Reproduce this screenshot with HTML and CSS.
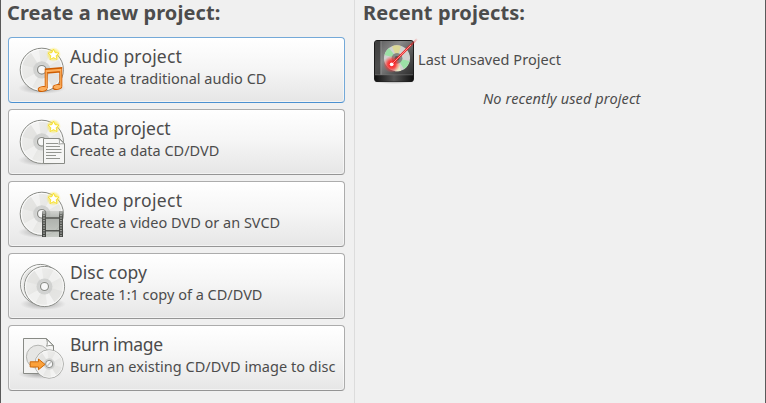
FILE: index.html
```
<!DOCTYPE html>
<html lang="en">
<head>
    <meta charset="UTF-8">
    <title>Disc Burner</title>
    <meta name="viewport" content="width=device-width, initial-scale=1.0">
    <link rel="stylesheet" href="styles.css">
</head>
<body>
    <!-- shared icon parts -->
    <svg class="defs" width="0" height="0">
        <defs>
            <linearGradient id="disc-fill" x1="0" y1="0" x2="1" y2="1">
                <stop offset="0" stop-color="#f1f1f0"/>
                <stop offset="0.5" stop-color="#e6e6e4"/>
                <stop offset="1" stop-color="#f2f2f1"/>
            </linearGradient>
            <radialGradient id="shade">
                <stop offset="0" stop-color="#000" stop-opacity="0.3"/>
                <stop offset="1" stop-color="#000" stop-opacity="0"/>
            </radialGradient>
            <radialGradient id="star-glow">
                <stop offset="0.4" stop-color="#fce94f"/>
                <stop offset="1" stop-color="#fce94f" stop-opacity="0"/>
            </radialGradient>
            <linearGradient id="film-fill" x1="0" y1="0" x2="0" y2="1">
                <stop offset="0" stop-color="#a9ada8" stop-opacity="0.4"/>
                <stop offset="0.3" stop-color="#a9ada8"/>
                <stop offset="1" stop-color="#c4c8c2"/>
            </linearGradient>
            <linearGradient id="film-edge" x1="0" y1="0" x2="0" y2="1">
                <stop offset="0" stop-color="#555753" stop-opacity="0.3"/>
                <stop offset="0.2" stop-color="#555753"/>
                <stop offset="1" stop-color="#454744"/>
            </linearGradient>
            <linearGradient id="drive-fill" x1="0" y1="0" x2="1" y2="1">
                <stop offset="0" stop-color="#555"/>
                <stop offset="0.35" stop-color="#8a8a8a"/>
                <stop offset="0.7" stop-color="#4a4a4a"/>
                <stop offset="1" stop-color="#222"/>
            </linearGradient>
            <linearGradient id="drive-front" x1="0" y1="0" x2="1" y2="0">
                <stop offset="0" stop-color="#111"/>
                <stop offset="0.5" stop-color="#555"/>
                <stop offset="1" stop-color="#111"/>
            </linearGradient>
            <radialGradient id="hot">
                <stop offset="0" stop-color="#f00"/>
                <stop offset="0.5" stop-color="#f22" stop-opacity="0.75"/>
                <stop offset="1" stop-color="#f44" stop-opacity="0"/>
            </radialGradient>
            <linearGradient id="beam" gradientUnits="userSpaceOnUse" x1="22" y1="27" x2="47" y2="2">
                <stop offset="0.6" stop-color="#f01818"/>
                <stop offset="1" stop-color="#f01818" stop-opacity="0.1"/>
            </linearGradient>
            <g id="disc">
                <circle r="21.6" fill="url(#disc-fill)" stroke="#888a85" stroke-width="1"/>
                <path d="M0 0L-20 -5A20.6 20.6 0 0 1 -11 -17.4ZM0 0L20 5A20.6 20.6 0 0 1 11 17.4Z" fill="#d6d6d4" opacity="0.35"/>
                <path d="M0 0L-11 -17.4A20.6 20.6 0 0 1 -3 -20.4ZM0 0L11 17.4A20.6 20.6 0 0 1 3 20.4ZM0 0L10 -18A20.6 20.6 0 0 1 18 -10ZM0 0L-10 18A20.6 20.6 0 0 1 -18 10Z" fill="#fff" opacity="0.4"/>
                <circle r="20.4" fill="none" stroke="#fff" stroke-opacity="0.8"/>
                <circle r="8.6" fill="#cbccca" opacity="0.8"/>
                <circle r="5.4" fill="#ddd"/>
                <circle r="4.3" fill="#f8f8f8" stroke="#888a85" stroke-width="1.2"/>
            </g>
            <g id="new-disc">
                <ellipse cx="24" cy="42" rx="24" ry="6" fill="url(#shade)"/>
                <use href="#disc" x="23.8" y="23.8"/>
                <circle cx="35.5" cy="8.5" r="7.4" fill="url(#star-glow)"/>
                <path d="M35.5 3.1l1.6 3.6 3.9.4-2.9 2.6.9 3.9-3.5-2-3.5 2 .9-3.9-2.9-2.6 3.9-.4z" fill="#fff" stroke="#f5dc1a" stroke-width="0.8"/>
            </g>
        </defs>
    </svg>

    <main class="chooser">
        <section class="create">
            <h2 class="heading create-heading">Create a new project:</h2>

            <button class="project focused">
                <svg class="icon" viewBox="0 0 48 48">
                    <use href="#new-disc"/>
                    <path d="M28.2 42V23.8L42.8 22.6V40M28.2 26.2L42.8 25" fill="none" stroke="#ce5c00" stroke-width="3"/>
                    <ellipse cx="24.6" cy="43" rx="4.4" ry="2.4" transform="rotate(-8 24.6 43)" fill="#fcaf5e" stroke="#ce5c00"/>
                    <ellipse cx="39.4" cy="41" rx="4.4" ry="2.4" transform="rotate(-8 39.4 41)" fill="#fcaf5e" stroke="#ce5c00"/>
                    <path d="M28.2 43V24.6L42.8 23.4V41M28.2 25.6L42.8 24.4" fill="none" stroke="#fcaf5e" stroke-width="1.3"/>
                </svg>
                <span class="label">
                    <span class="name audio-name">Audio project</span>
                    <span class="info">Create a traditional audio CD</span>
                </span>
            </button>

            <button class="project">
                <svg class="icon" viewBox="0 0 48 48">
                    <use href="#new-disc"/>
                    <path d="M25.5 20.5H41.5L46.5 25.5V45.5H25.5Z" fill="#f6f6f5" stroke="#888a85"/>
                    <path d="M40.8 20.5C42 23 41.5 25 40.8 26.2C43 25.6 45 25.6 46.5 26Z" fill="#fff" stroke="#888a85" stroke-width="0.8"/>
                    <path d="M28 25.5H40M28 28.5H42M28 31.5H43.5M28 34.5H43.5M28 37.5H38M28 40.5H42" stroke="#888a85" stroke-width="0.9"/>
                </svg>
                <span class="label">
                    <span class="name">Data project</span>
                    <span class="info">Create a data CD/DVD</span>
                </span>
            </button>

            <button class="project">
                <svg class="icon" viewBox="0 0 48 48">
                    <use href="#new-disc"/>
                    <path d="M24 21H45V47H24Z" fill="url(#film-fill)" opacity="0.9"/>
                    <path d="M24 21H28V47H24ZM41 21H45V47H41Z" fill="url(#film-edge)"/>
                    <path d="M28 28H41M28 40.8H41" stroke="#555753" stroke-width="1.5"/>
                    <path d="M26 22.5V47M43 22.5V47" stroke="#d4d5d2" stroke-width="1.1" stroke-dasharray="1.3 1.2"/>
                </svg>
                <span class="label">
                    <span class="name video-name">Video project</span>
                    <span class="info">Create a video DVD or an SVCD</span>
                </span>
            </button>

            <button class="project">
                <svg class="icon" viewBox="0 0 48 48">
                    <ellipse cx="25" cy="42" rx="23" ry="6" fill="url(#shade)"/>
                    <use href="#disc" transform="translate(22.6 22.5) scale(0.93)"/>
                    <use href="#disc" transform="translate(26.5 24.5) scale(0.93)"/>
                </svg>
                <span class="label">
                    <span class="name">Disc copy</span>
                    <span class="info">Create 1:1 copy of a CD/DVD</span>
                </span>
            </button>

            <button class="project">
                <svg class="icon" viewBox="0 0 48 48">
                    <ellipse cx="22" cy="40" rx="22" ry="5" fill="url(#shade)"/>
                    <path d="M5.5 4.5H28.5L35.5 11.5V39.5H5.5Z" fill="#f4f4f3" stroke="#888a85"/>
                    <circle cx="20" cy="22.8" r="11.6" fill="#e6e6e4" stroke="#b4b5b2"/>
                    <path d="M28 4.5C30 7.5 29.4 10 28.6 12.2C31 11.2 33.5 11.2 35.5 12Z" fill="#fff" stroke="#888a85" stroke-width="0.9"/>
                    <use href="#disc" transform="translate(31.2 30) scale(0.66)"/>
                    <circle cx="31.2" cy="30" r="3.6" fill="#f8f8f8" stroke="#888a85"/>
                    <path d="M29 32.4L33.2 27.6" stroke="#c4c5c3" stroke-width="1.4"/>
                    <path d="M12.2 27.8H20.5V25L27 30.4L20.5 35.7V33H12.2Z" fill="#fba13a" stroke="#ce6a0a"/>
                </svg>
                <span class="label">
                    <span class="name burn-name">Burn image</span>
                    <span class="info burn-info">Burn an existing CD/DVD image to disc</span>
                </span>
            </button>
        </section>

        <section class="recent">
            <h2 class="heading recent-heading">Recent projects:</h2>
            <div class="last">
                <svg class="icon" viewBox="0 0 48 48">
                    <ellipse cx="24" cy="44.5" rx="22" ry="2.5" fill="url(#shade)"/>
                    <rect x="4.5" y="3.5" width="39" height="41" rx="2.5" fill="url(#drive-fill)" stroke="#1c1c1c"/>
                    <path d="M5 6Q5 4 7 4H10.5V38H5Z" fill="#333" opacity="0.7"/>
                    <path d="M11 4V38" stroke="#999" stroke-width="0.7"/>
                    <path d="M5 38H43V43Q43 44.5 41.5 44.5H6.5Q5 44.5 5 43Z" fill="url(#drive-front)"/>
                    <path d="M5 37.8H43" stroke="#777" stroke-width="0.6"/>
                    <circle cx="27" cy="21.3" r="13" fill="#d0d2cf"/>
                    <path d="M27 21.3L14.5 18A13 13 0 0 1 19 11ZM27 21.3L39.5 24A13 13 0 0 1 34 32Z" fill="#9be0a6"/>
                    <path d="M27 21.3L22 9.3A13 13 0 0 1 31 9Z" fill="#dcd896"/>
                    <path d="M27 21.3L31 33.7A13 13 0 0 1 25 34.2Z" fill="#e8e8c4"/>
                    <circle cx="27" cy="21.3" r="5.4" fill="#858784"/>
                    <circle cx="27" cy="21.3" r="2.4" fill="#555"/>
                    <circle cx="21.7" cy="27.3" r="8.5" fill="url(#hot)"/>
                    <path d="M21.7 27.3L47 2" stroke="url(#beam)" stroke-width="2"/>
                    <path d="M21.7 27.3L41 8" stroke="#ffb0b0" stroke-width="0.8"/>
                    <circle cx="21.7" cy="27.3" r="1.9" fill="#fff"/>
                </svg>
                <span class="info last-info">Last Unsaved Project</span>
            </div>
            <p class="info empty">No recently used project</p>
        </section>
    </main>
</body>
</html>
```
FILE: styles.css
```
* {
    box-sizing: border-box;
}

body {
    margin: 0;
    background: #f0f0f0;
    color: #4c4c4c;
    font-family: "Noto Sans", "Open Sans", sans-serif;
}

.defs {
    display: block;
}

.chooser {
    display: flex;
    height: 403px;
    border-left: 1px solid #5a5a5a;
    border-right: 1px solid #5a5a5a;
    overflow: hidden;
}

.create {
    display: flex;
    flex-direction: column;
    gap: 6px;
    width: 354px;
    padding: 0 9px 0 7px;
    border-right: 1px solid #dcdcdc;
}

.heading {
    height: 31px;
    margin: 0;
    font-size: 20px;
    line-height: 26px;
    font-weight: bold;
    letter-spacing: 0.1px;
    white-space: nowrap;
}

.create-heading {
    margin-left: -1px;
}

.project {
    display: flex;
    align-items: center;
    gap: 4px;
    height: 66px;
    padding: 0 0 0 9px;
    border: 1px solid #acacac;
    border-bottom-color: #959595;
    border-radius: 4px;
    background: linear-gradient(#fff, #f6f6f6 45%, #e6e6e6);
    box-shadow: inset 0 0 0 1px rgba(255, 255, 255, 0.5);
    color: inherit;
    font-family: inherit;
    text-align: left;
}

.focused {
    border-color: #74a9d8;
    border-bottom-color: #4a90d0;
}

.icon {
    flex: none;
    width: 48px;
    height: 48px;
}

.label {
    display: flex;
    flex-direction: column;
    padding-bottom: 6px;
}

.name {
    font-size: 17.5px;
    line-height: 22px;
    white-space: nowrap;
}

.info {
    font-size: 14.5px;
    line-height: 22px;
    white-space: nowrap;
}

.audio-name {
    letter-spacing: 0.17px;
}

.video-name {
    letter-spacing: 0.32px;
}

.burn-name {
    letter-spacing: -0.34px;
}

.burn-info {
    letter-spacing: 0.04px;
}

.recent {
    flex: 1;
    padding-left: 8px;
}

.last {
    display: flex;
    align-items: center;
    height: 48px;
    margin-top: 6px;
    padding-left: 7px;
}

.last-info {
    padding-bottom: 4px;
    letter-spacing: 0.06px;
}

.empty {
    margin: 2px 0 0 120px;
    font-style: italic;
    letter-spacing: 0.12px;
}
```
